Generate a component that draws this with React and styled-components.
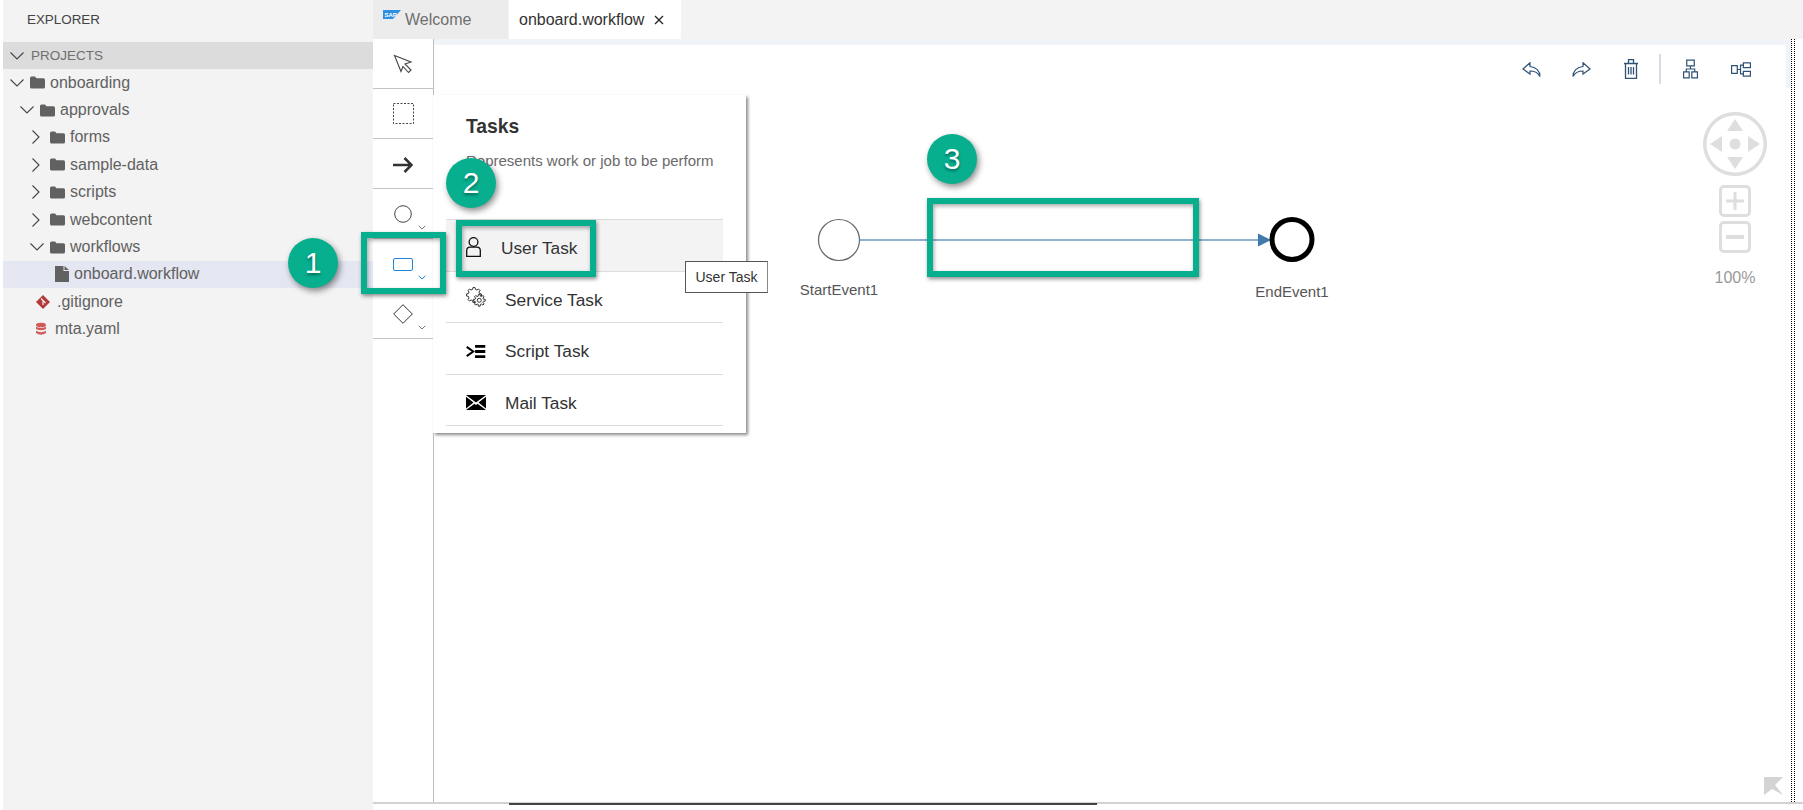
import React from "react";
import styled, { createGlobalStyle } from "styled-components";

const Global = createGlobalStyle`
  html, body { margin: 0; padding: 0; background: #fff; overflow: hidden; }
  body { font-family: "Liberation Sans", Arial, sans-serif; }
`;
const Page = styled.div`position: relative; display: flex; width: 1803px; height: 810px; padding-left: 3px; box-sizing: border-box; overflow: hidden;`;
const Sidebar = styled.aside`width: 370px; height: 100%; background: #f3f3f3; flex: none; color: #616161;`;
const SideTitle = styled.div`height: 42px; display: flex; align-items: center; padding: 0 0 4px 24px; box-sizing: border-box; font-size: 13.4px; color: #444;`;
const SectionHead = styled.div`height: 27px; background: #dcdcdc; display: flex; align-items: center; font-size: 13.5px; color: #6f6f6f; padding-left: 7px; gap: 7px;`;
const Row = styled.div`height: 27.4px; display: flex; align-items: center; padding-left: ${p => p.$pad}px; font-size: 16px; color: #616161; background: ${p => p.$sel ? "#e4e6f1" : "transparent"};`;
const Twisty = styled.span`width: 14px; margin-right: 6px; display: flex; justify-content: center; flex: none;`;
const RowIcon = styled.svg`flex: none; margin-right: ${p => p.$mr ?? 5}px;`;
const Main = styled.div`flex: 1; min-width: 0; display: flex; flex-direction: column; height: 100%;`;
const Tabs = styled.div`height: 39px; background: #f3f3f3; display: flex; flex: none; gap: 1px;`;
const Tab = styled.div`display: flex; align-items: center; box-sizing: border-box; height: 39px; width: ${p => p.$w}px; padding-left: 10px; background: ${p => p.$active ? "#fff" : "#ececec"}; color: ${p => p.$active ? "#333" : "#6f6f6f"}; font-size: 16px;`;
const TabClose = styled.svg`margin-left: 10px;`;
const SapLogo = styled.svg`margin: -11px 4px 0 0;`;
const Body = styled.div`flex: none; display: flex; height: 763px;`;
const Palette = styled.div`width: 60px; flex: none; box-sizing: content-box; border-right: 1px solid #bdbdbd; background: #fff;`;
const Tool = styled.div`position: relative; height: 49px; border-bottom: 1px solid #c4c4c4; display: flex; align-items: center; justify-content: center; box-sizing: content-box;`;
const ToolCaret = styled.svg`position: absolute; right: 7px; bottom: 8px;`;
const Canvas = styled.div`position: relative; width: 1352px; flex: none; background: #fff; display: flex; flex-direction: column;`;
const TopBand = styled.div`height: 6px; background: #f0f4f8; flex: none;`;
const ActionBar = styled.div`height: 30px; padding: 9px 35px 28px 0; display: flex; align-items: center; justify-content: flex-end; flex: none;`;
const ActionBtn = styled.svg`display: block; margin-left: ${p => p.$ml || 0}px;`;
const ActionSep = styled.div`width: 2px; height: 30px; background: #d5dce3; margin: 0 22px 0 21px;`;
const NavWidget = styled.div`align-self: flex-end; width: 64px; margin-right: 19px; display: flex; flex-direction: column; align-items: center;`;
const ZoomBtn = styled.div`width: 32px; height: 32px; box-sizing: border-box; border: 3px solid #dedede; border-radius: 5px; display: flex; align-items: center; justify-content: center; margin-top: ${p => p.$mt}px;`;
const NavLabel = styled.div`margin-top: 16px; line-height: 18px; font-size: 16px; color: #999;`;
const Collapse = styled.svg`position: absolute; right: 3px; bottom: 7px;`;
const RightRail = styled.div`width: 5px; flex: none;`;
const RailBand = styled.div`height: 49px; background: #f0f4f8;`;
const Dotted = styled.div`flex: none; width: 4px; height: 100%; border-left: 1px dotted #000; border-right: 1px dotted #000; box-sizing: border-box;`;
const Track = styled.div`position: relative; flex: none; height: 2px; background: #d2d2d2;`;
const Thumb = styled.div`position: absolute; left: 136px; width: 588px; top: 1px; height: 2px; background: #444;`;
const NodeLabel = styled.div`position: absolute; transform: translateX(-50%); left: ${p => p.$x}px; top: ${p => p.$y}px; font-size: 15px; color: #555; white-space: nowrap;`;
const Diagram = styled.svg`position: absolute; left: 0; top: 0;`;
const Pop = styled.div`position: absolute; left: 433px; top: 95px; width: 313px; height: 338px; background: #fff; box-shadow: 2px 2px 3px #8a8a8a; box-sizing: border-box; padding: 0 23px 0 13px;`;
const PopTitle = styled.div`font-size: 19.3px; font-weight: bold; color: #333; padding: 21px 0 0 20px; line-height: 21px;`;
const PopDesc = styled.div`font-size: 15px; color: #6a6a6a; margin: 14px 8px 0 20px; white-space: nowrap; overflow: hidden; line-height: 20px; height: 68px;`;
const Item = styled.div`height: 43.5px; padding: 7px 0 0 20px; border-top: 1px solid #dcdcdc; display: flex; align-items: center; gap: 19px; font-size: 17.3px; color: #333; background: ${p => p.$hover ? "#f3f3f3" : "transparent"}; &:last-child { border-bottom: 1px solid #dcdcdc; }`;
const ItemIcon = styled.svg`flex: none;`;
const Tip = styled.div`position: absolute; left: 685px; top: 261px; width: 83px; height: 32px; box-sizing: border-box; border: 1px solid #555; border-right-color: #888; background: #fff; font-size: 14px; color: #333; display: flex; align-items: center; justify-content: center;`;
const Mark = styled.div`position: absolute; left: ${p => p.$x}px; top: ${p => p.$y}px; width: ${p => p.$w}px; height: ${p => p.$h}px; box-sizing: border-box; border: 6px solid #07af8f; box-shadow: 1px 2px 4px rgba(0,0,0,.45), inset 1px 2px 4px rgba(0,0,0,.35);`;
const Badge = styled.div`position: absolute; left: ${p => p.$x - 25}px; top: ${p => p.$y - 25}px; width: 50px; height: 50px; border-radius: 50%; background: #07af8f; color: #fff; font-size: 30px; display: flex; align-items: center; justify-content: center; box-shadow: 2px 3px 6px rgba(0,0,0,.45); text-shadow: 0 2px 3px rgba(0,0,0,.4);`;

const Chevron = ({ open }) => (
  <svg width="14" height="14" viewBox="0 0 14 14" fill="none" stroke="#444" strokeWidth="1.1">
    {open ? <path d="M.5 3.500 7 10 13.500 3.500" /> : <path d="M2.500.5 9 7 2.500 13.500" />}
  </svg>
);
const Folder = () => (
  <RowIcon width="15" height="13" viewBox="0 0 15 13"><path fill="#616161" d="M0 2q0-1.500 1.500-1.500H5L6.500 2.200H13.500Q15 2.200 15 3.700V11q0 1.500-1.500 1.500h-12Q0 12.500 0 11Z" /></RowIcon>
);
const FileI = () => (
  <RowIcon width="14" height="16" viewBox="0 0 14 16"><path fill="#616161" d="M0 0h8.500v5H14v11H0ZM9.500 0 14 4H9.500Z" /></RowIcon>
);
const Caret = ({ color = "#777" }) => (
  <ToolCaret width="8" height="5" viewBox="0 0 8 5" fill="none" stroke={color}><path d="M.7.8 4 4 7.300.8" /></ToolCaret>
);

const gearPath = (cx, cy, r1, r2, n) => {
  const pts = [];
  const step = (Math.PI * 2) / n;
  for (let i = 0; i < n; i++) {
    const a = i * step;
    [[-0.32, r1], [-0.18, r2], [0.18, r2], [0.32, r1]].forEach(([f, r]) => {
      pts.push(`${(cx + r * Math.cos(a + f * step)).toFixed(2)} ${(cy + r * Math.sin(a + f * step)).toFixed(2)}`);
    });
  }
  return `M${pts.join("L")}Z`;
};

const tree = [
  { n: "onboarding", pad: 7, open: true },
  { n: "approvals", pad: 17, open: true },
  { n: "forms", pad: 27 },
  { n: "sample-data", pad: 27 },
  { n: "scripts", pad: 27 },
  { n: "webcontent", pad: 27 },
  { n: "workflows", pad: 27, open: true },
];

export default function App() {
  return (
    <Page>
      <Global />
      <Sidebar>
        <SideTitle>EXPLORER</SideTitle>
        <SectionHead><Chevron open />PROJECTS</SectionHead>
        {tree.map(t => (
          <Row key={t.n} $pad={t.pad}><Twisty><Chevron open={t.open} /></Twisty><Folder />{t.n}</Row>
        ))}
        <Row $pad={52} $sel><FileI />onboard.workflow</Row>
        <Row $pad={33}>
          <RowIcon $mr={7} width="14" height="14" viewBox="0 0 14 14"><path fill="#b23a3a" d="M7 0 14 7 7 14 0 7Z" /><path stroke="#f3f3f3" strokeWidth="1.200" d="M5 3.500 7 5.500V10M7 5.500 9.500 8" fill="none" /></RowIcon>
          .gitignore
        </Row>
        <Row $pad={33}>
          <RowIcon $mr={9} width="10" height="14" viewBox="0 0 11 14"><g fill="#cf5b5b"><ellipse cx="5.500" cy="2.500" rx="5.500" ry="2.500" /><path d="M0 4.500q5.500 3 11 0V7q-5.500 3-11 0ZM0 9q5.500 3 11 0v2.500q-5.500 3.500-11 0Z" /></g></RowIcon>
          mta.yaml
        </Row>
      </Sidebar>
      <Main>
        <Tabs>
          <Tab $w={135}>
            <SapLogo width="18" height="9" viewBox="0 0 18 9"><path fill="#2f8fe0" d="M0 0h18l-8 9H0Z" /><text x="1.500" y="7" fontSize="6" fontWeight="bold" fill="#fff" fontFamily="Liberation Sans">SAP</text></SapLogo>
            Welcome
          </Tab>
          <Tab $w={172} $active>
            onboard.workflow
            <TabClose width="10" height="10" viewBox="0 0 10 10" stroke="#222" strokeWidth="1.300"><path d="M1 1l8 8M9 1l-8 8" /></TabClose>
          </Tab>
        </Tabs>
        <Body>
          <Palette>
            <Tool>
              <svg width="20" height="20" viewBox="0 0 20 20" fill="#fff" stroke="#444" strokeWidth="1.100"><path d="M1.500 1.500 18 8l-6 2 6 6-2.500 2.500-5.500-6-2 5Z" /></svg>
            </Tool>
            <Tool><svg width="21" height="21" viewBox="0 0 21 21" fill="none" stroke="#444" strokeDasharray="2 1.500"><rect x=".5" y=".5" width="20" height="20" /></svg></Tool>
            <Tool><svg width="20" height="18" viewBox="0 -2 20 18" fill="none" stroke="#333" strokeWidth="2.600"><path d="M0 8h18.500M11.500 1l7 7-7 7" /></svg></Tool>
            <Tool><svg width="18" height="19" viewBox="0 -1 18 19" fill="none" stroke="#444"><circle cx="9" cy="9" r="8.300" /></svg><Caret /></Tool>
            <Tool><svg width="20" height="15" viewBox="0 -2 20 15" fill="none" stroke="#1f84d8"><rect x=".5" y=".5" width="19" height="12" rx="1.500" /></svg><Caret color="#1f84d8" /></Tool>
            <Tool><svg width="20" height="20" viewBox="0 0 20 20" fill="none" stroke="#333"><path d="M10 .7 19.300 10 10 19.300.7 10Z" /></svg><Caret /></Tool>
          </Palette>
          <Canvas>
            <TopBand />
            <ActionBar>
              <ActionBtn width="19" height="15" viewBox="0 0 19 15" fill="none" stroke="#2e5377" strokeWidth="1.200"><path d="M8 .8 1 7l7 5V9c5 0 8 1.500 10 5.500C18 9 14 5 8 4.500Z" /></ActionBtn>
              <ActionBtn $ml={31} width="19" height="15" viewBox="0 0 19 15" fill="none" stroke="#2e5377" strokeWidth="1.200"><path d="M11 .8l7 6.200-7 5V9C6 9 3 10.500 1 14.500 1 9 5 5 11 4.500Z" /></ActionBtn>
              <ActionBtn $ml={33} width="14" height="20" viewBox="0 0 14 20" fill="none" stroke="#2e5377" strokeWidth="1.300"><path d="M0 4.500h14M1.500 4.500v15h11v-15M4.500 4.500V.7h5v3.800M4.500 8v7.500M7 8v7.500M9.500 8v7.500" /></ActionBtn>
              <ActionSep />
              <ActionBtn width="15" height="20" viewBox="0 0 16 20" fill="none" stroke="#2e5377" strokeWidth="1.300"><path d="M4 .6h8v6H4ZM.6 13h6v6.400h-6ZM9.400 13h6v6.400h-6ZM8 6.600v3.400M3.500 13v-3h9v3" /></ActionBtn>
              <ActionBtn $ml={33} width="20" height="15" viewBox="0 0 21 15" fill="none" stroke="#2e5377" strokeWidth="1.300"><path d="M.6 3.500h6v8h-6ZM13 .6h7.400v5H13ZM13 9.400h7.400v5H13ZM6.600 7.500H10M13 3H10v9h3" /></ActionBtn>
            </ActionBar>
            <NavWidget>
              <svg width="64" height="64" viewBox="0 0 64 64" fill="#dedede">
                <path fillRule="evenodd" d="M32 0a32 32 0 1 0 .01 0ZM32 3.500a28.500 28.500 0 1 1-.01 0Z" />
                <path d="M32 7l8 12H24ZM32 57l8-12H24ZM7 32l12-8V40ZM57 32l-12-8V40Z" />
                <circle cx="32" cy="32" r="5.500" />
              </svg>
              <ZoomBtn $mt={9}><svg width="18" height="18" viewBox="0 0 18 18" fill="#dedede"><path d="M7.500 0h3v7.500H18v3h-7.500V18h-3v-7.500H0v-3h7.500Z" /></svg></ZoomBtn>
              <ZoomBtn $mt={4}><svg width="18" height="4" viewBox="0 0 18 4" fill="#dedede"><path d="M0 0h18v4H0Z" /></svg></ZoomBtn>
              <NavLabel>100%</NavLabel>
            </NavWidget>
            <Collapse width="19" height="18" viewBox="0 0 19 18"><path fill="#d4d4d4" d="M0 0H19L11 8 19 18 8 12 0 18Z" /></Collapse>
          </Canvas>
          <RightRail><RailBand /></RightRail>
          <Dotted />
        </Body>
        <Track><Thumb /></Track>
      </Main>

      <Diagram width="1803" height="810" viewBox="0 0 1803 810">
        <circle cx="839" cy="240" r="20.500" fill="#fff" stroke="#666" strokeWidth="1.200" />
        <path d="M859.500 240H1262" stroke="#6b97bf" strokeWidth="1.500" />
        <path d="M1258 233.500 1271 240 1258 246.500Z" fill="#3f79ad" />
        <circle cx="1292" cy="239.500" r="20" fill="#fff" stroke="#000" strokeWidth="5" />
      </Diagram>
      <NodeLabel $x={839} $y={281}>StartEvent1</NodeLabel>
      <NodeLabel $x={1292} $y={283}>EndEvent1</NodeLabel>

      <Pop>
        <PopTitle>Tasks</PopTitle>
        <PopDesc>Represents work or job to be perform</PopDesc>
        <Item $hover>
          <ItemIcon width="16" height="24" viewBox="0 0 16 24" fill="none" stroke="#111" strokeWidth="1.300"><circle cx="7.500" cy="5" r="4.400" /><path d="M.7 19.300V13.500q0-3.300 3.500-3.300h6.600q3.500 0 3.500 3.300v5.800Z" /></ItemIcon>
          User Task
        </Item>
        <Item>
          <ItemIcon width="20" height="26" viewBox="0 0 20 26" fill="#fff" stroke="#333" strokeWidth="1"><path d={gearPath(8, 8, 5.800, 7.500, 8)} /><path d={gearPath(13.300, 13.300, 4.300, 6, 8)} /><circle cx="13.300" cy="13.300" r="2" /></ItemIcon>
          Service Task
        </Item>
        <Item>
          <ItemIcon width="20" height="13" viewBox="0 0 20 14"><path d="M0 2l7 5-7 5" fill="none" stroke="#000" strokeWidth="2.200" /><path d="M9 0h11v3H9ZM9 5.500h11v3H9ZM9 11h11v3H9Z" fill="#000" /></ItemIcon>
          Script Task
        </Item>
        <Item>
          <ItemIcon width="20" height="17" viewBox="0 0 20 17"><path d="M0 0h20L10 7.500ZM0 1.800V13.500L7.500 7.500ZM20 1.800V13.500L12.500 7.500ZM0 15l8.500-6.300L10 10l1.500-1.300L20 15Z" fill="#000" /></ItemIcon>
          Mail Task
        </Item>
      </Pop>
      <Tip>User Task</Tip>

      <Mark $x={361} $y={232} $w={85} $h={62} />
      <Mark $x={456} $y={220} $w={140} $h={57} />
      <Mark $x={927} $y={198} $w={272} $h={79} />
      <Badge $x={313} $y={263}>1</Badge>
      <Badge $x={471} $y={183}>2</Badge>
      <Badge $x={952} $y={159}>3</Badge>
    </Page>
  );
}
